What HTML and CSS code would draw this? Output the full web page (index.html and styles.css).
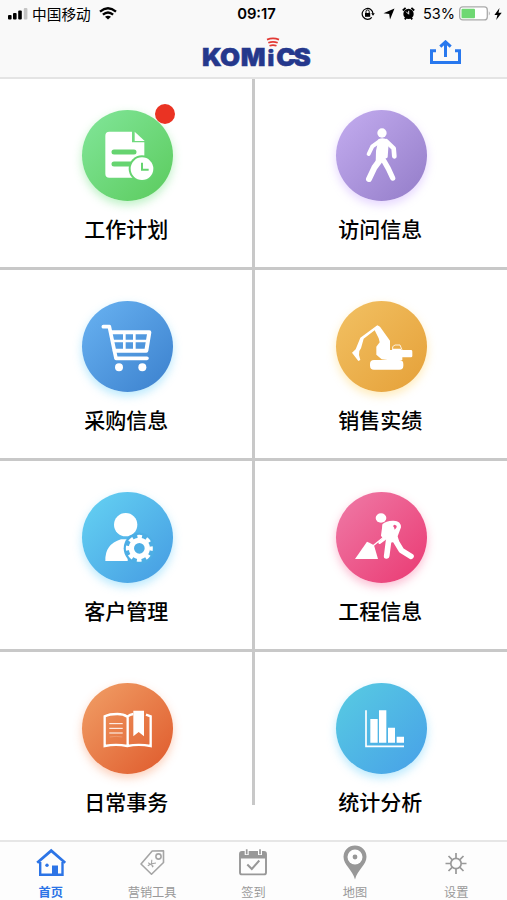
FILE: index.html
```html
<!DOCTYPE html>
<html lang="zh-CN">
<head>
  <meta charset="utf-8">
  <title>KOMiCS</title>
  <link rel="stylesheet" href="styles.css">
</head>
<body>
  <div class="app">
    <header class="header">
      <div class="status-bar">
        <div class="status-left">
          <svg class="signal" width="20" height="13" viewBox="0 0 20 13">
            <rect x="0" y="8" width="3.6" height="4.5" rx="1"/>
            <rect x="5" y="6" width="3.6" height="6.5" rx="1"/>
            <rect x="10.200" y="3.500" width="3.600" height="9" rx="1"/>
            <rect x="15.800" y="1" width="3.600" height="11.500" rx="1" fill="#c4c4c4"/>
          </svg>
          <span class="carrier">中国移动</span>
          <svg class="wifi" width="18" height="13" viewBox="0 0 18 13" fill="none" stroke="#000" stroke-width="2.300">
            <path d="M1 4.600Q9-2.200 17 4.600M3.900 7.700Q9 3.300 14.100 7.700"/>
            <path d="M9 12.500L6 9.800Q9 7.500 12 9.800Z" fill="#000" stroke="none"/>
          </svg>
        </div>
        <div class="time">09:17</div>
        <div class="status-right">
          <svg class="lock" width="14" height="13" viewBox="0 0 14 13" fill="none" stroke="#000">
            <path d="M10.800 10.300A5.400 5.400 0 1 1 12 6.800" stroke-width="1.200"/>
            <path d="M10.200 6.300h3.600l-1.800 2.500z" fill="#000" stroke="none"/>
            <rect x="4" y="6" width="5.200" height="3.800" fill="#000" stroke="none"/>
            <path d="M5 6V4.500a1.600 1.600 0 0 1 3.200 0V6" stroke-width="1"/>
          </svg>
          <svg class="arrow" width="12" height="12" viewBox="0 0 12 12"><path d="M11.500.5L7 11.500 6.200 6 .5 5.300z"/></svg>
          <svg class="alarm" width="13" height="13" viewBox="0 0 13 13">
            <circle cx="6.500" cy="6.900" r="5.200"/>
            <path d="M.8 3.500L3.600.9M12.200 3.500L9.400.9M2.800 12.400l1.200-1.600M10.200 12.400L9 10.800" stroke="#000" stroke-width="1.800"/>
            <path d="M4.200 4.700l2.500 2.500V3.800" stroke="#f8f8f8" fill="none"/>
          </svg>
          <span class="percent">53%</span>
          <svg class="battery" width="32" height="15" viewBox="0 0 32 15">
            <rect x=".7" y=".9" width="27.600" height="13" rx="3" fill="#fff" stroke="#aaa" stroke-width="1.300"/>
            <rect x="2.500" y="2.700" width="13.500" height="9.500" rx="1" fill="#6fd873"/>
            <path d="M29.800 5.200q2 2.200 0 4.400z" fill="#aaa"/>
          </svg>
          <svg class="bolt" width="8" height="12" viewBox="0 0 8 12"><path d="M5.500 0L.4 7h3L2.200 12 7.700 4.800H4.500z"/></svg>
        </div>
      </div>
      <div class="nav-bar">
        <svg class="logo" width="114" height="36" viewBox="0 0 114 36">
          <text transform="scale(1.080 1)" x="0 16.700 36 60.700 68.800 84.800" y="28.800">KOM<tspan class="small">i</tspan>CS</text>
          <g fill="none" stroke="#e23a35" stroke-width="1.700">
            <path d="M65 2.600Q71 .2 77 2.600M66.300 5.800Q71 3.900 75.700 5.800M67.500 8.800Q71 7.500 74.500 8.800"/>
          </g>
        </svg>
        <svg class="share" width="32" height="25" viewBox="0 0 32 25" fill="none" stroke="#2878ee" stroke-width="3">
          <path d="M7 10.700H2.500v11.700h28V10.700H26"/>
          <path d="M16.500 17V2M11.300 6.700l5.200-4.800 5.200 4.800"/>
        </svg>
      </div>
    </header>

    <main class="menu">
      <a class="item">
        <span class="circle green">
          <svg viewBox="35 43 273 273">
            <path d="M117 108h68v32h37v94q0 12-12 12h-93q-12 0-12-12V120q0-12 12-12z" fill="#fff"/>
            <path d="M193 108l30 28h-30z" fill="#fff"/>
            <path d="M131 169h60M131 205h50" stroke="#66d470" stroke-width="15" stroke-linecap="round"/>
            <circle cx="215" cy="219" r="40" fill="#66d470"/>
            <circle cx="215" cy="219" r="34" fill="#fff"/>
            <path d="M215 201v21h20" fill="none" stroke="#66d470" stroke-width="6"/>
          </svg>
          <i class="dot"></i>
        </span>
        <span class="label">工作计划</span>
      </a>
      <a class="item">
        <span class="circle purple">
          <svg viewBox="33 43 273 273" fill="none" stroke="#fff" stroke-linecap="round" stroke-linejoin="round">
            <circle cx="171" cy="112" r="14" fill="#fff" stroke="none"/>
            <path d="M163 133q8-4 17-1l8 10-3 42-30 17 1-35z" fill="#fff" stroke-width="6"/>
            <path d="M165 136l-23 16-11 23" stroke-width="12"/>
            <path d="M184 137l22 21 2 24" stroke-width="14"/>
            <path d="M166 192l-18 24-16 34" stroke-width="18"/>
            <path d="M177 196l13 23 13 28" stroke-width="16"/>
          </svg>
        </span>
        <span class="label">访问信息</span>
      </a>
      <a class="item">
        <span class="circle blue">
          <svg viewBox="35 30 273 273" fill="none" stroke="#fff" stroke-linecap="round" stroke-linejoin="round">
            <path d="M99 107h18l20 95h93" stroke-width="11"/>
            <path d="M122 124h115l-9 55h-95" stroke-width="12"/>
            <path d="M128 150h104" stroke-width="8"/>
            <path d="M162 124v55M192 124v55" stroke-width="8"/>
            <circle cx="146" cy="229" r="12" fill="#fff" stroke="none"/>
            <circle cx="216" cy="229" r="12" fill="#fff" stroke="none"/>
          </svg>
        </span>
        <span class="label">采购信息</span>
      </a>
      <a class="item">
        <span class="circle yellow">
          <svg viewBox="33 30 273 273" fill="#fff">
            <path d="M157 103l8 4 30 42v28h7v-4h26v4h31q3 1 3 5v13q0 4-4 4h-26v8h-44l-18-2-16-14v-24l10-13-3-12-12-24-33 25-8 29-5 8-1 12 4 15-6 3-19-25 11-10 14-35z"/>
            <rect x="135" y="207" width="100" height="29" rx="12"/>
            <path d="M203 178v-11l7-5h15l7 17" fill="none" stroke="#fff" stroke-width="2.500"/>
          </svg>
        </span>
        <span class="label">销售实绩</span>
      </a>
      <a class="item">
        <span class="circle sky">
          <svg viewBox="35 36 273 273">
            <circle cx="166" cy="134" r="35" fill="#fff"/>
            <path d="M105 243q-2-50 47-65h20v65z" fill="#fff"/>
            <circle cx="207" cy="205" r="47" fill="#4daee5"/>
            <circle cx="207" cy="205" r="24" fill="none" stroke="#fff" stroke-width="16"/>
            <circle cx="207" cy="205" r="35.500" fill="none" stroke="#fff" stroke-width="10" stroke-dasharray="14 13.880" stroke-dashoffset="7"/>
          </svg>
        </span>
        <span class="label">客户管理</span>
      </a>
      <a class="item">
        <span class="circle pink">
          <svg viewBox="33 36 273 273" fill="none" stroke="#fff" stroke-linecap="round" stroke-linejoin="round">
            <ellipse cx="168" cy="114" rx="16" ry="14" fill="#fff" stroke="none"/>
            <path d="M90 237l36-52 7 3 14 8 12 41z" fill="#fff" stroke="none"/>
            <path d="M146 196l42-34" stroke-width="4"/>
            <path d="M172 133q12-12 34-11 22 1 22 20l-10 27 4 14-30 6-18-25z" fill="#fff" stroke="none"/>
            <path d="M176 138l-4 28 8 10-16 12" stroke-width="8"/>
            <path d="M191 181l-6 47" stroke-width="17"/>
            <path d="M209 178l20 33 29 18" stroke-width="17"/>
            <path d="M208 134q10 2 6 9l-5 6q-1-8-5-11z" fill="#ed5089" stroke="none"/>
          </svg>
        </span>
        <span class="label">工程信息</span>
      </a>
      <a class="item">
        <span class="circle orange">
          <svg viewBox="35 38 273 273" fill="none" stroke="#fff">
            <path d="M171 139q-12-8-30-8-24 0-38 7v89q34-7 68 0 34-7 70 0v-89l-14-5M171 139q8-7 18-8M172 139v88" stroke-width="7"/>
            <path d="M118 160h38M118 174h38M118 188h38" stroke-width="3" stroke-linecap="round"/>
            <path d="M118 200q20-4 38 0" stroke-width="1.500" opacity=".4"/>
            <path d="M189 121h32v77l-16-13-16 13z" fill="#fff" stroke="none"/>
          </svg>
        </span>
        <span class="label">日常事务</span>
      </a>
      <a class="item">
        <span class="circle cyan">
          <svg viewBox="33 38 273 273" fill="#fff">
            <path d="M123 120v108h114" fill="none" stroke="#fff" stroke-width="5"/>
            <path d="M136 146h22v71h-22zM162 120h22v97h-22zM189 172h21v45h-21zM215 199h22v18h-22z"/>
          </svg>
        </span>
        <span class="label">统计分析</span>
      </a>
    </main>

    <nav class="tabs">
      <a class="tab active">
        <svg width="30" height="36" viewBox="0 0 30 36" fill="none" stroke="#2c74e6" stroke-width="2.400">
          <path d="M4.200 17v12.700h22.300V17"/>
          <path d="M1.200 17.800L15.200 5.600l14 12.200" stroke-width="2.800"/>
          <path d="M16 20.500h6v10h-6z" fill="#2c74e6" stroke="none"/>
          <circle cx="11" cy="20.300" r="1.700" fill="#2c74e6" stroke="none"/>
        </svg>
        <span>首页</span>
      </a>
      <a class="tab">
        <svg width="30" height="36" viewBox="0 0 30 36" fill="none" stroke="#a5a5a5" stroke-width="1.600">
          <path d="M4 19L15.200 6l11.300-.1V17.500L14.500 29.200Z" stroke-linejoin="round"/>
          <circle cx="21.500" cy="11.500" r="2.600"/>
          <path d="M14.800 14.800l-.3 4 4.500-.8M11.200 17.800l5.300 3.600M10.800 20.800l3.500-2 1.500 3.500" stroke-width="1.100"/>
        </svg>
        <span>营销工具</span>
      </a>
      <a class="tab">
        <svg width="30" height="36" viewBox="0 0 30 36" fill="none" stroke="#989898" stroke-width="1.900">
          <rect x="2" y="7" width="26" height="22.400" rx="2"/>
          <path d="M2 7h26v6.500H2z" fill="#989898" stroke="none"/>
          <path d="M8.700 4v6M22 4v6" stroke="#fff" stroke-width="4"/>
          <path d="M8.700 4.300v5M22 4.300v5" stroke-width="1.700"/>
          <path d="M9.300 19.500l4.500 4.500 7.500-8.500" stroke-width="2"/>
        </svg>
        <span>签到</span>
      </a>
      <a class="tab">
        <svg width="30" height="36" viewBox="0 0 30 36">
          <path d="M15 34.500C12.500 25 3.500 20 3.500 11.800a11.500 11.300 0 0 1 23 0C26.500 20 17.500 25 15 34.500z" fill="#989898"/>
          <circle cx="15" cy="12" r="7.500" fill="#fff"/>
          <circle cx="15" cy="12" r="2.400" fill="#989898"/>
        </svg>
        <span>地图</span>
      </a>
      <a class="tab">
        <svg width="30" height="36" viewBox="0 0 30 36" fill="none" stroke="#999" stroke-width="1.700">
          <circle cx="15" cy="18.500" r="5.200"/>
          <path d="M15 13V8M15 24v5M9.500 18.500h-5M20.500 18.500h5M11.100 14.600L7.500 11M18.900 14.600l3.600-3.600M11.100 22.400L7.500 26M18.900 22.400l3.600 3.600"/>
        </svg>
        <span>设置</span>
      </a>
    </nav>
  </div>
</body>
</html>
```
FILE: styles.css
```css
* {
  box-sizing: border-box;
}

body {
  margin: 0;
  background-color: #fff;
  font-family: "Noto Sans CJK SC", sans-serif;
  color: #000;
}

svg {
  display: block;
  flex-shrink: 0;
}

.app {
  display: flex;
  flex-direction: column;
  width: 507px;
  height: 900px;
  overflow: hidden;
}

.header {
  height: 79px;
  background-color: #f9f9f9;
  border-bottom: 2px solid #e4e4e4;
}

.status-bar {
  display: grid;
  grid-template-columns: 1fr 60px 1fr;
  align-items: center;
  height: 27px;
  padding: 0 5px 0 8px;
}

.status-left,
.status-right {
  display: flex;
  align-items: center;
}

.status-right {
  justify-content: flex-end;
}

.carrier {
  margin: 0 8px 0 4px;
  font-size: 14.7px;
  line-height: 20px;
}

.time {
  padding-left: 3px;
  font-family: Inter, sans-serif;
  font-size: 14.8px;
  font-weight: 600;
  text-align: center;
}

.arrow {
  margin-left: 8px;
}

.alarm {
  margin: 0 8px 0 7px;
}

.percent {
  font-family: Inter, sans-serif;
  font-size: 14.5px;
}

.battery {
  margin: 0 3px 0 4px;
}

.nav-bar {
  display: flex;
  justify-content: space-between;
  padding: 10px 46px 0 202px;
}

.share {
  margin-top: 3px;
}

.logo text {
  font-family: Inter, sans-serif;
  font-size: 24px;
  font-weight: 900;
  fill: #25388c;
  stroke: #25388c;
  stroke-width: 0.5px;
}

.logo .small {
  font-size: 21px;
}

/* the line between the two columns stops above the tab bar */
.menu {
  display: grid;
  grid-template-columns: 1fr 1fr;
  grid-template-rows: repeat(4, 191px);
  height: 761px;
  background: linear-gradient(#c8c8c8, #c8c8c8) 252px 0 / 3px 726px no-repeat;
}

.item {
  display: flex;
  flex-direction: column;
  align-items: center;
  padding: 31px 0 0 1px;
  border-bottom: 3px solid #c8c8c8;
}

.item:nth-child(even) {
  padding-left: 2px;
}

.item:nth-last-child(-n+2) {
  border-bottom: none;
}

.circle {
  position: relative;
  width: 91px;
  height: 91px;
  border-radius: 50%;
}

.green {
  background: linear-gradient(135deg, #82e69a, #5bcb5d);
  box-shadow: 0 4px 10px rgba(91, 220, 110, 0.4);
}

.purple {
  background: linear-gradient(135deg, #c4adf0, #937cc8);
  box-shadow: 0 4px 10px rgba(190, 150, 255, 0.4);
}

.blue {
  background: linear-gradient(135deg, #69b3f2, #3b80cd);
  box-shadow: 0 4px 10px rgba(80, 200, 250, 0.4);
}

.yellow {
  background: linear-gradient(135deg, #f2c163, #e5a038);
  box-shadow: 0 4px 10px rgba(255, 205, 80, 0.4);
}

.sky {
  background: linear-gradient(135deg, #65d3f3, #459be2);
  box-shadow: 0 4px 10px rgba(80, 200, 250, 0.4);
}

.pink {
  background: linear-gradient(135deg, #ef7ba7, #ea3972);
  box-shadow: 0 4px 10px rgba(245, 70, 130, 0.35);
}

.orange {
  background: linear-gradient(135deg, #f1a067, #df592b);
  box-shadow: 0 4px 10px rgba(245, 120, 60, 0.35);
}

.cyan {
  background: linear-gradient(135deg, #58cce2, #47a0e8);
  box-shadow: 0 4px 10px rgba(80, 200, 250, 0.4);
}

.dot {
  position: absolute;
  top: -6px;
  right: -2px;
  width: 20px;
  height: 20px;
  border-radius: 50%;
  background-color: #ea3323;
}

.label {
  margin-top: 12px;
  padding-right: 2px;
  font-size: 21px;
  font-weight: 500;
  line-height: 30px;
}

.tabs {
  display: grid;
  grid-template-columns: repeat(5, 1fr);
  height: 60px;
  background-color: #fdfdfd;
  border-top: 2px solid #e6e6e6;
}

.tab {
  display: flex;
  flex-direction: column;
  align-items: center;
  padding-top: 3px;
  font-size: 12.2px;
  line-height: 18px;
  color: #999;
}

.tab span {
  margin-top: 2px;
}

.active {
  color: #2c74e6;
  font-weight: 700;
}
```
